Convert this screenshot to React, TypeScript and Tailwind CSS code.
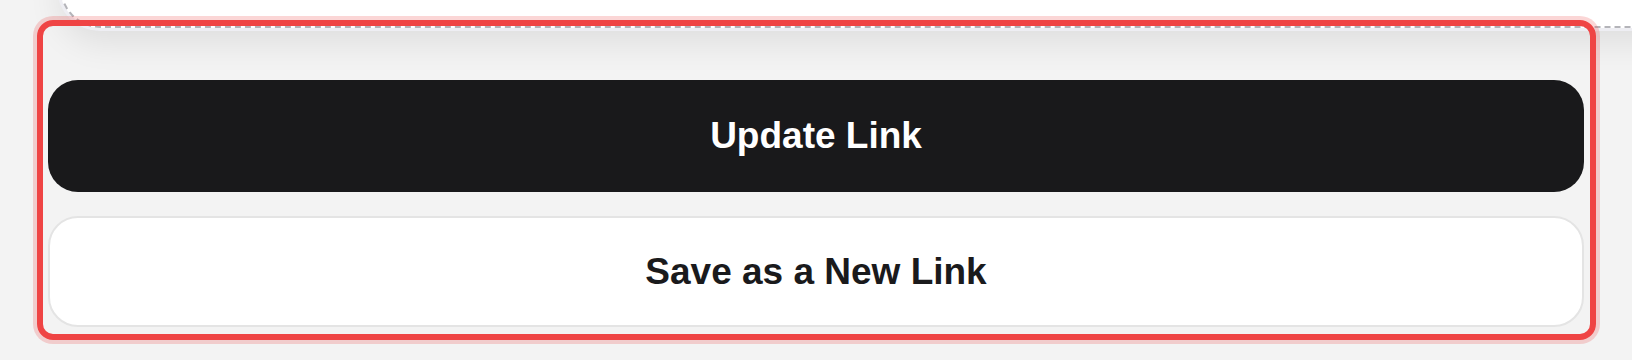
import React from 'react';

const App: React.FC = () => {
  return (
    <div className="w-[1632px] h-[360px] bg-[#f3f3f3] overflow-hidden font-['Liberation_Sans',Arial,sans-serif]">
      {/* card above, mostly scrolled out of view */}
      <div className="h-[68px] -mt-[40px] ml-[60px] -mr-[60px] bg-white border-l-2 border-b-2 border-dashed border-[#b4b4b9] rounded-bl-[40px] shadow-[0_0_0_3px_#eeeef3,0_14px_34px_rgba(0,0,0,0.09)]" />

      {/* sticky footer, selected */}
      <div className="relative z-10 -mt-[8px] ml-[37px] w-[1559px] border-[6px] border-[#ef4444] rounded-[16px] shadow-[0_0_0_4px_rgba(239,68,68,0.22)] pt-[54px] pl-[5px] pr-[6px] pb-[7px] flex flex-col gap-[24px]">
        <button className="h-[112px] w-full rounded-[30px] bg-[#19191b] text-white text-[37px] font-bold">
          Update Link
        </button>
        <button className="h-[111px] w-full rounded-[30px] bg-white border-2 border-[#e4e4e4] text-[#1a1a1c] text-[37px] font-bold">
          Save as a New Link
        </button>
      </div>
    </div>
  );
};

export default App;
